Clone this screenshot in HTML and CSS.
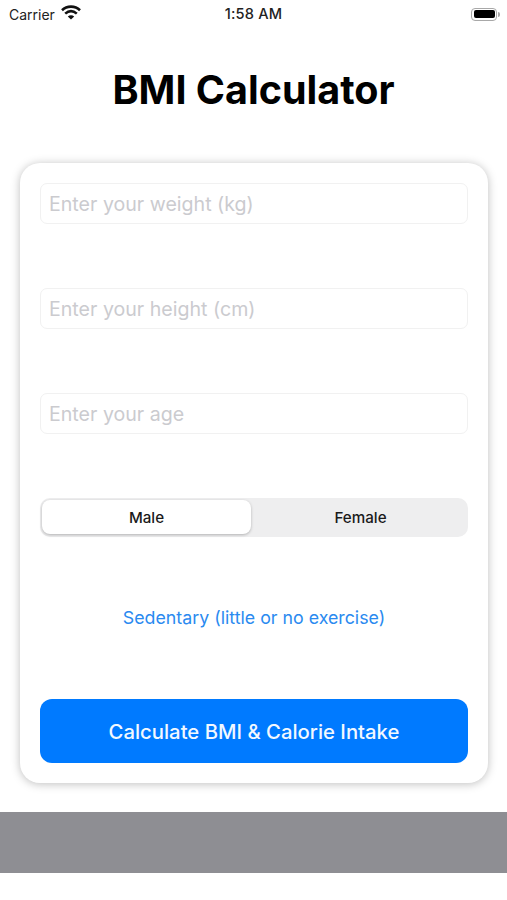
FILE: index.html
```html
<!DOCTYPE html>
<html>
<head>
<meta charset="UTF-8">
<title>BMI Calculator</title>
<link rel="stylesheet" href="styles.css">
</head>
<body>

<div class="status_bar">
	<div class="status_left">
		<span>Carrier</span>
		<svg class="wifi" width="20" height="15" viewBox="0 0 20 15">
			<path d="M1 5.2 C6 0.4 14 0.4 19 5.2" fill="none" stroke="#111" stroke-width="2.6"/>
			<path d="M4.2 8.6 C7.8 5.4 12.2 5.4 15.8 8.6" fill="none" stroke="#111" stroke-width="2.6"/>
			<path d="M10 14.6 L6.8 11.4 C8.6 9.8 11.4 9.8 13.2 11.4 Z" fill="#111"/>
		</svg>
	</div>
	<div class="status_time">1:58 AM</div>
	<div class="status_right">
		<div class="battery"><div class="battery_fill"></div></div>
		<div class="battery_tip"></div>
	</div>
</div>

<h1>BMI Calculator</h1>

<div class="card">
	<div class="field">Enter your weight (kg)</div>
	<div class="field">Enter your height (cm)</div>
	<div class="field">Enter your age</div>

	<div class="segment">
		<div class="seg_item seg_active">Male</div>
		<div class="seg_item seg_other">Female</div>
	</div>

	<div class="activity">Sedentary (little or no exercise)</div>

	<div class="calc_btn">Calculate BMI &amp; Calorie Intake</div>
</div>

<div class="gray_band"></div>

</body>
</html>
```

FILE: styles.css
```css
html, body{
	margin:0;
	padding:0;
	background-color:#ffffff;
}
body{
	width:507px;
	height:900px;
	overflow:hidden;
	font-family:Inter, "Liberation Sans", sans-serif;
	color:#000000;
}
.status_bar{
	height:28px;
	display:flex;
	align-items:center;
	justify-content:space-between;
	font-size:14px;
	color:#222222;
}
.status_left{
	width:120px;
	padding-left:9px;
	box-sizing:border-box;
	display:flex;
	align-items:center;
	gap:6px;
}
.wifi{
	margin-top:-3px;
}
.status_time{
	font-size:14.6px;
	font-weight:500;
	letter-spacing:0.2px;
}
.status_right{
	width:120px;
	padding-right:7px;
	box-sizing:border-box;
	display:flex;
	align-items:center;
	justify-content:flex-end;
}
.battery{
	width:26px;
	height:13px;
	box-sizing:border-box;
	border:1.5px solid #a8a8a8;
	border-radius:4px;
	padding:1.5px;
}
.battery_fill{
	height:100%;
	background-color:#000000;
	border-radius:2px;
}
.battery_tip{
	width:2px;
	height:5px;
	margin-left:1px;
	background-color:#a8a8a8;
	border-radius:0 2px 2px 0;
}
h1{
	margin:0;
	padding-top:40px;
	height:95px;
	box-sizing:border-box;
	font-size:39.5px;
	line-height:45px;
	font-weight:700;
	text-align:center;
}
.card{
	margin:40px 19px 0 20px;
	height:620px;
	box-sizing:border-box;
	padding:19px 20px;
	background-color:#ffffff;
	border-radius:20px;
	box-shadow:0 1px 10px rgba(0,0,0,0.26);
	display:flex;
	flex-direction:column;
}
.field{
	height:41px;
	box-sizing:border-box;
	margin:1px 0 63px;
	padding-left:8px;
	border:1px solid #f1f1f1;
	border-radius:7px;
	font-size:19.6px;
	line-height:41px;
	color:#cbcbcf;
}
.segment{
	height:39px;
	margin-top:1px;
	box-sizing:border-box;
	padding:2px;
	background-color:#eeeeef;
	border-radius:10px;
	display:flex;
	font-size:15.2px;
	font-weight:500;
	color:#1a1a1a;
}
.seg_item{
	text-align:center;
	line-height:36px;
}
.seg_active{
	width:209px;
	height:34px;
	background-color:#ffffff;
	border-radius:8px;
	box-shadow:0 1px 3px rgba(0,0,0,0.25);
}
.seg_other{
	flex:1;
	padding-left:4px;
}
.activity{
	margin-top:69px;
	height:24px;
	line-height:24px;
	font-size:17.8px;
	text-align:center;
	color:#2a8af0;
}
.calc_btn{
	margin-top:69px;
	height:64px;
	line-height:65px;
	background-color:#007aff;
	border-radius:12px;
	color:#f2f8ff;
	font-size:20.3px;
	font-weight:500;
	text-align:center;
}
.gray_band{
	margin-top:29px;
	height:61px;
	background-color:#8e8e93;
}
```
